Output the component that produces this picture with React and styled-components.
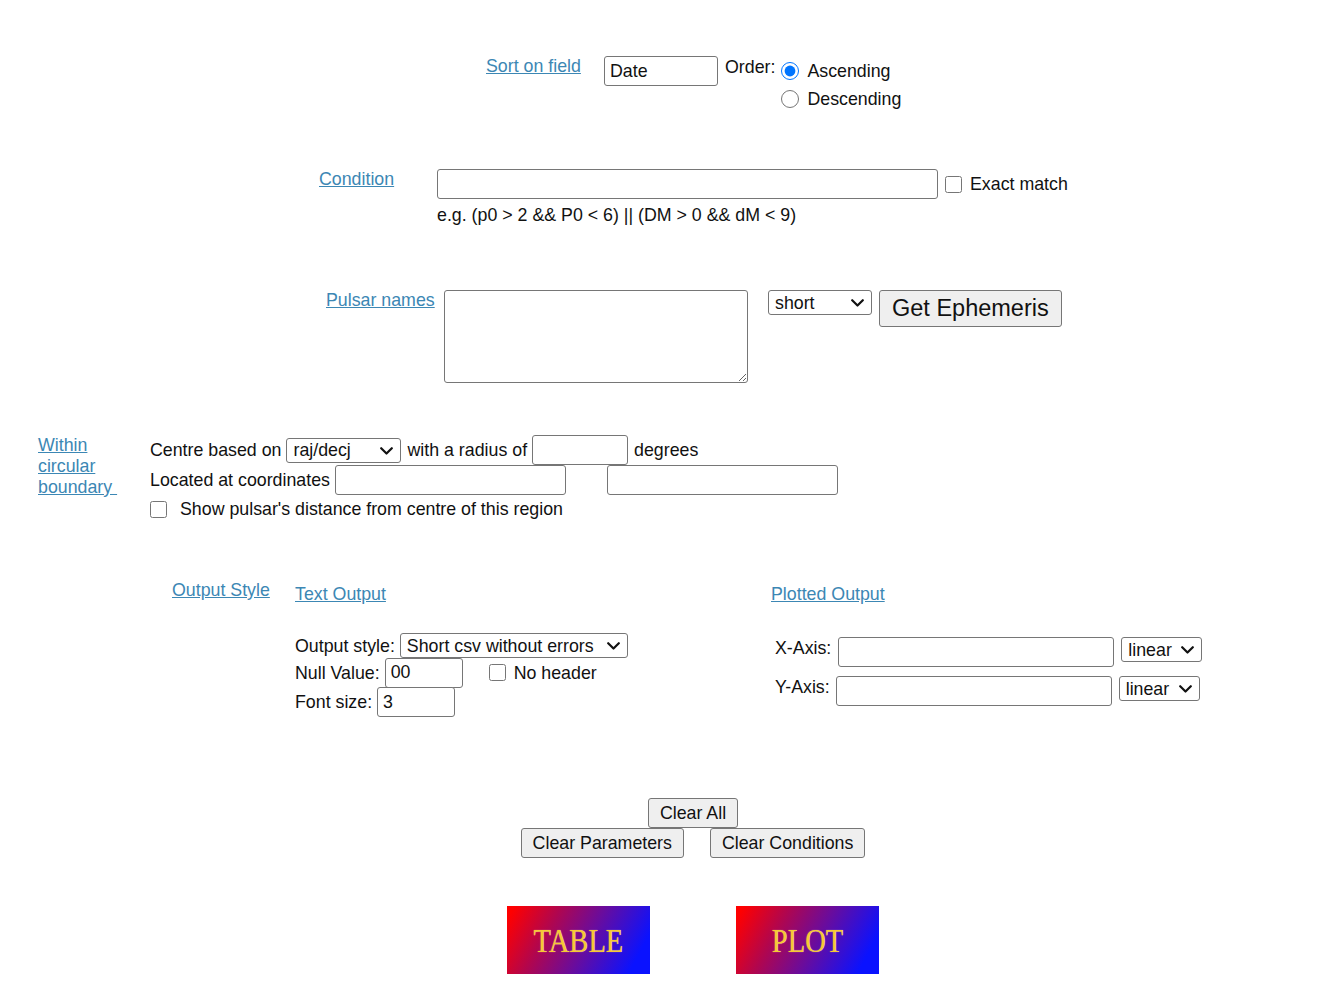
import React from 'react';
import styled, { createGlobalStyle } from 'styled-components';

const GlobalStyle = createGlobalStyle`
  body {
    margin: 0;
    background: #fff;
    color: #111;
    font-family: "Liberation Sans", Arial, sans-serif;
    font-size: 17.8px;
  }
`;

const Page = styled.form`
  width: 1318px;
  padding-top: 56px;
  line-height: 20px;
`;

// one band of the form; fixed height so the next band starts where the reference has it
const Band = styled.div`
  display: flex;
  align-items: flex-start;
  height: ${p => p.height}px;
  padding-left: ${p => p.left || 0}px;
`;

const HelpLink = styled.a`
  display: block;
  flex: none;
  width: ${p => p.width}px;
  margin-top: ${p => p.offset || 0}px;
  color: #3c87b4;
  text-decoration: underline;
  line-height: ${p => p.lh || 20}px;
`;

const TextInput = styled.input`
  box-sizing: border-box;
  width: ${p => p.width}px;
  height: 30px;
  margin: 0;
  padding: 1px 5px;
  border: 1px solid #767676;
  border-radius: 3px;
  font: inherit;
  color: #111;
  background: #fff;
  margin-left: ${p => p.gap || 0}px;
`;

const TextArea = styled.textarea`
  box-sizing: border-box;
  width: 304px;
  height: 93px;
  margin: 0;
  border: 1px solid #767676;
  border-radius: 3px;
  font: inherit;
`;

const SelectWrap = styled.span`
  position: relative;
  display: inline-flex;
  flex: none;
  margin-left: ${p => p.gap || 0}px;

  svg {
    position: absolute;
    right: 8px;
    top: 9px;
    pointer-events: none;
  }
`;

const SelectBox = styled.select`
  box-sizing: border-box;
  width: ${p => p.width}px;
  height: 25px;
  margin: 0;
  padding: 0 24px 0 6px;
  border: 1px solid #767676;
  border-radius: 3px;
  background: #fff;
  font: inherit;
  color: #111;
  appearance: none;
`;

const Chevron = () => (
  <svg width="13" height="8" viewBox="0 0 13 8">
    <path d="M1.2 1.2l5.3 5.3 5.3-5.3" fill="none" stroke="#111" strokeWidth="2.2" strokeLinecap="round" strokeLinejoin="round" />
  </svg>
);

function Select({ width, gap, children, ...rest }) {
  return (
    <SelectWrap gap={gap}>
      <SelectBox width={width} {...rest}>
        {children}
      </SelectBox>
      <Chevron />
    </SelectWrap>
  );
}

const Button = styled.button`
  box-sizing: border-box;
  height: ${p => (p.big ? 37 : 30)}px;
  margin: 0;
  margin-left: ${p => p.gap || 0}px;
  padding: 0 ${p => (p.big ? 12 : 11)}px;
  border: 1px solid #767676;
  border-radius: 3px;
  background: #efefef;
  color: #111;
  font-family: inherit;
  font-size: ${p => (p.big ? 23.5 : 17.8)}px;
`;

const Check = styled.input.attrs({ type: 'checkbox' })`
  width: 17px;
  height: 17px;
  margin: 0 ${p => p.after || 8}px 0 ${p => p.gap || 0}px;
  flex: none;
`;

const Radio = styled.input.attrs({ type: 'radio' })`
  width: 18px;
  height: 18px;
  margin: 0 8px 0 6px;
  flex: none;
`;

const Text = styled.span`
  white-space: nowrap;
  margin-left: ${p => p.gap || 0}px;
  margin-right: ${p => p.after || 0}px;
  margin-top: ${p => p.offset || 0}px;
`;

const Column = styled.div`
  display: flex;
  flex-direction: column;
  width: ${p => (p.width ? `${p.width}px` : 'auto')};
  margin-top: ${p => p.offset || 0}px;
  flex: none;
`;

const Line = styled.div`
  display: flex;
  align-items: ${p => p.align || 'center'};
  height: ${p => p.height}px;
  margin-top: ${p => p.offset || 0}px;
  padding-left: ${p => p.indent || 0}px;
`;

const RadioRow = styled.label`
  display: flex;
  align-items: center;
  height: 28px;
`;

const Hint = styled.div`
  margin-top: 6px;
`;

const Centered = styled.div`
  display: flex;
  justify-content: center;
  gap: ${p => p.gap || 0}px;
  padding-left: 68px;
`;

const Stack = styled.div`
  height: ${p => p.height}px;
`;

const Banner = styled.a`
  display: flex;
  align-items: center;
  justify-content: center;
  width: 143px;
  height: 68px;
  background: linear-gradient(118deg, #ff0000 4%, #b0064f 30%, #6a0c9c 55%, #0a12ff 88%);
  text-decoration: none;
`;

const BannerText = styled.span`
  display: inline-block;
  font-family: "Liberation Serif", "Times New Roman", serif;
  font-size: 34px;
  line-height: 34px;
  color: #f6c935;
  transform: scaleX(0.84);
  text-shadow: 0 0 1px rgba(255, 240, 200, 0.8);
  padding-top: 2px;
`;

export default function App() {
  return (
    <>
      <GlobalStyle />
      <Page onSubmit={e => e.preventDefault()}>
        <Band height={113} left={486}>
          <HelpLink href="#" width={118}>Sort on field</HelpLink>
          <TextInput width={114} defaultValue="Date" />
          <Text gap={7} offset={1}>Order:</Text>
          <Column offset={1}>
            <RadioRow>
              <Radio name="order" defaultChecked />
              Ascending
            </RadioRow>
            <RadioRow>
              <Radio name="order" />
              Descending
            </RadioRow>
          </Column>
        </Band>

        <Band height={121} left={319}>
          <HelpLink href="#" width={118}>Condition</HelpLink>
          <Column>
            <Line height={30}>
              <TextInput width={501} />
              <Check gap={7} />
              <Text>Exact match</Text>
            </Line>
            <Hint>{'e.g. (p0 > 2 && P0 < 6) || (DM > 0 && dM < 9)'}</Hint>
          </Column>
        </Band>

        <Band height={145} left={326}>
          <HelpLink href="#" width={118}>Pulsar names</HelpLink>
          <TextArea />
          <Select width={104} gap={20} defaultValue="short">
            <option value="short">short</option>
            <option value="long">long</option>
          </Select>
          <Button type="button" big gap={7}>Get Ephemeris</Button>
        </Band>

        <Band height={145} left={38}>
          <HelpLink href="#" width={112} lh={21}>
            Within
            <br />
            circular
            <br />
            boundary&nbsp;
          </HelpLink>
          <Column>
            <Line height={30}>
              <Text after={5}>Centre based on</Text>
              <Select width={115} defaultValue="raj/decj">
                <option>raj/decj</option>
                <option>gl/gb</option>
                <option>jname</option>
              </Select>
              <Text gap={6} after={5}>with a radius of</Text>
              <TextInput width={96} />
              <Text gap={6}>degrees</Text>
            </Line>
            <Line height={30}>
              <Text after={5}>Located at coordinates</Text>
              <TextInput width={231} />
              <TextInput width={231} gap={41} />
            </Line>
            <Line height={27}>
              <Check after={13} style={{ marginTop: 1 }} />
              <Text>Show pulsar's distance from centre of this region</Text>
            </Line>
          </Column>
        </Band>

        <Band height={218} left={172}>
          <HelpLink href="#" width={123}>Output Style</HelpLink>
          <Column width={476} offset={4}>
            <HelpLink href="#">Text Output</HelpLink>
            <Line height={25} offset={29}>
              <Text after={5}>Output style:</Text>
              <Select width={228} defaultValue="short_no_errors">
                <option value="short_no_errors">Short csv without errors</option>
                <option value="short">Short with errors</option>
                <option value="long">Long with errors</option>
              </Select>
            </Line>
            <Line height={29}>
              <Text after={5}>Null Value:</Text>
              <TextInput width={78} defaultValue="00" />
              <Check gap={26} after={8} />
              <Text>No header</Text>
            </Line>
            <Line height={30}>
              <Text after={5}>Font size:</Text>
              <TextInput width={78} defaultValue="3" />
            </Line>
          </Column>
          <Column offset={4}>
            <HelpLink href="#">Plotted Output</HelpLink>
            <Line height={39} offset={33} align="flex-start" indent={4}>
              <Text offset={1} after={7}>X-Axis:</Text>
              <TextInput width={276} />
              <Select width={81} gap={7} defaultValue="linear">
                <option>linear</option>
                <option>log</option>
              </Select>
            </Line>
            <Line height={39} align="flex-start" indent={4}>
              <Text offset={1} after={6}>Y-Axis:</Text>
              <TextInput width={276} />
              <Select width={81} gap={7} defaultValue="linear">
                <option>linear</option>
                <option>log</option>
              </Select>
            </Line>
          </Column>
        </Band>

        <Stack height={108}>
          <Centered>
            <Button type="button">Clear All</Button>
          </Centered>
          <Centered gap={26}>
            <Button type="button">Clear Parameters</Button>
            <Button type="button">Clear Conditions</Button>
          </Centered>
        </Stack>

        <Centered gap={86}>
          <Banner href="#">
            <BannerText>TABLE</BannerText>
          </Banner>
          <Banner href="#">
            <BannerText>PLOT</BannerText>
          </Banner>
        </Centered>
      </Page>
    </>
  );
}
